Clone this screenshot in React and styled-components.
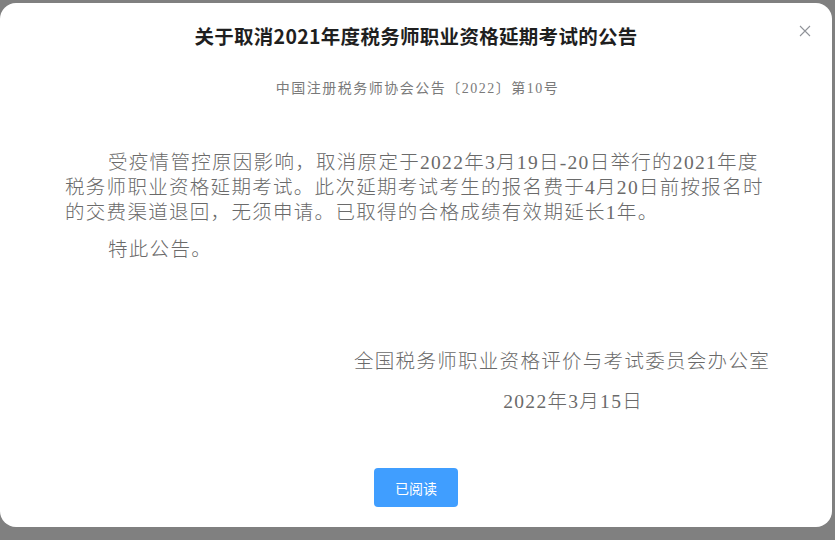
import React from 'react';
import styled, { createGlobalStyle } from 'styled-components';

const GlobalStyle = createGlobalStyle`
  html, body {
    margin: 0;
    padding: 0;
    background: #808080;
  }
  body {
    font-family: "Noto Sans CJK SC", sans-serif;
  }
`;

const Overlay = styled.div`
  width: 835px;
  height: 540px;
  padding: 3px 3px 0 0;
  box-sizing: border-box;
  background: #808080;
`;

const Dialog = styled.div`
  position: relative;
  width: 832px;
  height: 524px;
  background: #fff;
  border-radius: 16px;
  display: flex;
  flex-direction: column;
  box-sizing: border-box;
`;

const Header = styled.div`
  padding: 20px 20px 0;
  text-align: center;
`;

const Title = styled.h2`
  margin: 0;
  font-family: "Noto Sans CJK SC", sans-serif;
  font-size: 19.5px;
  line-height: 26px;
  letter-spacing: 0.3px;
  font-weight: 700;
  color: #1f1f1f;
`;

const CloseButton = styled.button`
  position: absolute;
  top: 22px;
  right: 21px;
  width: 12px;
  height: 12px;
  padding: 0;
  border: 0;
  background: none;
  cursor: pointer;
  display: flex;
  align-items: center;
  justify-content: center;
`;

const Body = styled.div`
  flex: 1;
  padding: 0 62px 0 65px;
  font-family: "Liberation Serif", "Noto Sans CJK SC", serif;
  color: #6a6a6a;
`;

const Subtitle = styled.div`
  margin-top: 30px;
  text-align: center;
  font-size: 14px;
  line-height: 20px;
  letter-spacing: 1.5px;
  color: #7a7a7a;
`;

const Paragraph = styled.p`
  margin: ${({ $first }) => ($first ? '51px' : '12px')} 0 0;
  font-size: 19.5px;
  line-height: 25px;
  letter-spacing: 1.3px;
  text-indent: 43px;
  font-weight: 300;
`;

const Signature = styled.div`
  margin-top: ${({ $gap }) => $gap}px;
  padding-right: ${({ $inset }) => $inset}px;
  text-align: right;
  font-size: 19.5px;
  line-height: 25px;
  letter-spacing: 1.3px;
  font-weight: 300;
`;

const Footer = styled.div`
  display: flex;
  justify-content: center;
  padding: 0 20px 20px;
`;

const PrimaryButton = styled.button`
  width: 84px;
  height: 39px;
  border: 0;
  border-radius: 4px;
  background: #409eff;
  color: #fff;
  font-family: "Noto Sans CJK SC", sans-serif;
  font-size: 14px;
  cursor: pointer;
`;

const CloseIcon = () => (
  <svg width="12" height="12" viewBox="0 0 12 12" fill="none">
    <path d="M1 1L11 11M11 1L1 11" stroke="#909399" strokeWidth="1.1" />
  </svg>
);

const App = () => (
  <>
    <GlobalStyle />
    <Overlay>
      <Dialog>
        <Header>
          <Title>关于取消2021年度税务师职业资格延期考试的公告</Title>
        </Header>
        <CloseButton aria-label="关闭">
          <CloseIcon />
        </CloseButton>
        <Body>
          <Subtitle>中国注册税务师协会公告〔2022〕第10号</Subtitle>
          <Paragraph $first>
            受疫情管控原因影响，取消原定于2022年3月19日-20日举行的2021年度税务师职业资格延期考试。此次延期考试考生的报名费于4月20日前按报名时的交费渠道退回，无须申请。已取得的合格成绩有效期延长1年。
          </Paragraph>
          <Paragraph>特此公告。</Paragraph>
          <Signature $gap={87} $inset={0}>全国税务师职业资格评价与考试委员会办公室</Signature>
          <Signature $gap={15} $inset={127}>2022年3月15日</Signature>
        </Body>
        <Footer>
          <PrimaryButton>已阅读</PrimaryButton>
        </Footer>
      </Dialog>
    </Overlay>
  </>
);

export default App;
